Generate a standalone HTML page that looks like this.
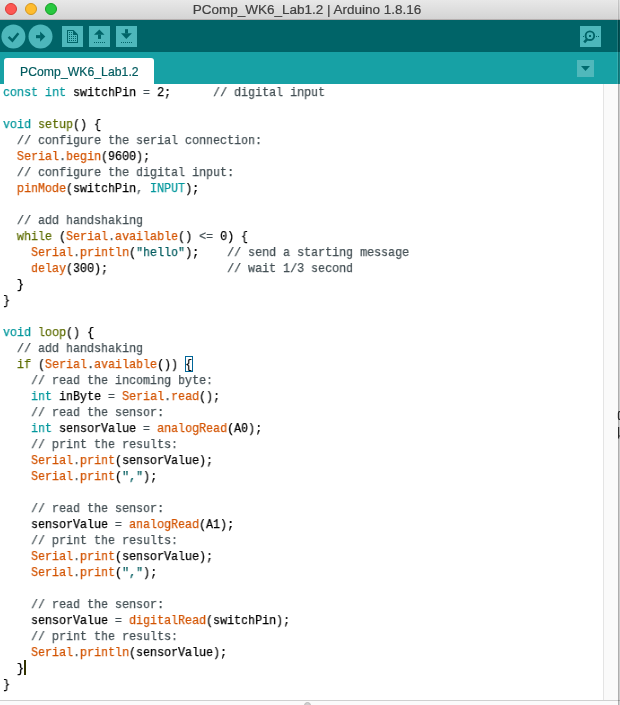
<!DOCTYPE html>
<html><head><meta charset="utf-8">
<style>
*{margin:0;padding:0;box-sizing:border-box}
html,body{width:620px;height:705px;overflow:hidden;background:#f2f2f2}
body{position:relative;font-family:"Liberation Sans",sans-serif}
#title{position:absolute;left:0;top:0;width:620px;height:20px;background:linear-gradient(#e8e8e8,#d4d4d4);border-bottom:1px solid #b5afaf}
#title .t{will-change:transform;-webkit-text-stroke:0.2px #404040;position:absolute;left:0;width:614px;top:2.5px;text-align:center;font-size:13.5px;color:#404040;line-height:14px}
.dot{position:absolute;top:3px;width:12px;height:12px;border-radius:50%}
#toolbar{position:absolute;left:0;top:20px;width:620px;height:32px;background:#006468}
#tabbar{position:absolute;left:0;top:52px;width:620px;height:32px;background:#17A1A5}
#tab{position:absolute;left:4px;top:6px;width:150px;height:27px;background:#fff;border-radius:3px 3px 0 0}
#tab span{will-change:transform;-webkit-text-stroke:0.2px #005B5F;position:absolute;left:15.5px;top:6.5px;font-size:12.2px;letter-spacing:0.05px;color:#005B5F;line-height:14px}
#dd{position:absolute;left:577px;top:8px;width:17px;height:17px;background:#50B8BB}
#editor{position:absolute;left:0;top:84px;width:603px;height:616px;background:#fff;overflow:hidden}
#sb{position:absolute;left:603px;top:84px;width:17px;height:616px;background:#fafafa;border-left:1px solid #e4e4e4}
#re1{position:absolute;left:617px;top:0;width:1px;height:84px;background:rgba(255,255,255,0.14)}
#re2{position:absolute;left:618px;top:20px;width:1px;height:685px;background:rgba(0,0,0,0.3)}
#re2t{position:absolute;left:618px;top:0;width:1px;height:20px;background:rgba(0,0,0,0.14)}
#re3{position:absolute;left:619px;top:20px;width:1px;height:685px;background:rgba(0,0,0,0.18)}
#re3t{position:absolute;left:619px;top:0;width:1px;height:20px;background:rgba(0,0,0,0.03)}
#bottom{position:absolute;left:0;top:700px;width:620px;height:5px;background:#fbfbfb;border-top:1px solid #d0d0d0}
#knob{position:absolute;left:303.5px;top:702px;width:7px;height:7px;border-radius:50%;background:#d0d0d0;border:1px solid #bababa}
.code{position:absolute;left:3px;top:1px;font-family:"Liberation Mono",monospace;font-size:13px;transform:scaleX(0.89744);transform-origin:0 0;will-change:transform;-webkit-text-stroke:0.25px currentColor;line-height:16px;color:#000;white-space:pre}
.ln{height:16px}
#bbox{position:absolute;left:185px;top:272px;width:8px;height:16px;border:1px solid #006699}
#caret{position:absolute;left:24px;top:576px;width:2px;height:15px;background:#333300}
</style></head><body>
<div id="title">
 <div class="dot" style="left:5px;background:#fd5753;border:1px solid #d83c36"></div>
 <div class="dot" style="left:25px;background:#febc2e;border:1px solid #d4961f"></div>
 <div class="dot" style="left:45px;background:#28c840;border:1px solid #14a024"></div>
 <div class="t">PComp_WK6_Lab1.2 | Arduino 1.8.16</div>
</div>
<div id="toolbar">
<svg width="618" height="32" viewBox="0 20 618 32" style="position:absolute;left:0;top:0">
 <circle cx="13.4" cy="36.5" r="12" fill="#4DB7BB"/>
 <circle cx="40.5" cy="36.5" r="12" fill="#4DB7BB"/>
 <polyline points="8.6,36.8 12.4,40.6 18.4,33.2" fill="none" stroke="#006468" stroke-width="2.5"/>
 <rect x="36" y="35.1" width="4.4" height="3.1" fill="#006468"/>
 <polygon points="40.1,31.5 45.3,36.6 40.1,41.8" fill="#006468"/>
 <rect x="62" y="26" width="21" height="21" fill="#4DB7BB"/>
 <rect x="89" y="26" width="21" height="21" fill="#4DB7BB"/>
 <rect x="116" y="26" width="21" height="21" fill="#4DB7BB"/>
 <rect x="580" y="26" width="21" height="21" fill="#4DB7BB"/>
 <!-- new doc -->
 <polygon points="67,30 73.5,30 78,34.5 78,43 67,43" fill="#006468"/>
 <polygon points="68,31 73,31 73,35 77,35 77,42 68,42" fill="#4DB7BB"/>
 <g fill="#006468">
  <rect x="69" y="32" width="1" height="1"/><rect x="71" y="32" width="1" height="1"/>
  <rect x="69" y="34" width="1" height="1"/><rect x="71" y="34" width="1" height="1"/>
  <rect x="69" y="36" width="1" height="1"/><rect x="71" y="36" width="1" height="1"/><rect x="73" y="36" width="1" height="1"/><rect x="75" y="36" width="1" height="1"/>
  <rect x="69" y="38" width="1" height="1"/><rect x="71" y="38" width="1" height="1"/><rect x="73" y="38" width="1" height="1"/><rect x="75" y="38" width="1" height="1"/>
  <rect x="69" y="40" width="1" height="1"/><rect x="71" y="40" width="1" height="1"/><rect x="73" y="40" width="1" height="1"/><rect x="75" y="40" width="1" height="1"/>
 </g>
 <!-- upload -->
 <polygon points="99.3,29.5 94,34.7 104.5,34.7" fill="#006468"/>
 <rect x="98" y="34.6" width="3" height="4.3" fill="#006468"/>
 <g fill="#006468">
  <rect x="94" y="42" width="1" height="1"/><rect x="96" y="42" width="1" height="1"/><rect x="98" y="42" width="1" height="1"/><rect x="100" y="42" width="1" height="1"/><rect x="102" y="42" width="1" height="1"/><rect x="104" y="42" width="1" height="1"/>
 </g>
 <!-- download -->
 <rect x="125" y="29.2" width="3" height="4.2" fill="#006468"/>
 <polygon points="121,33.3 131.9,33.3 126.3,38.9" fill="#006468"/>
 <g fill="#006468">
  <rect x="121" y="42" width="1" height="1"/><rect x="123" y="42" width="1" height="1"/><rect x="125" y="42" width="1" height="1"/><rect x="127" y="42" width="1" height="1"/><rect x="129" y="42" width="1" height="1"/><rect x="131" y="42" width="1" height="1"/>
 </g>
 <!-- search -->
 <circle cx="589.9" cy="35.7" r="4.3" fill="none" stroke="#006468" stroke-width="1.9"/>
 <rect x="589" y="35" width="2" height="2" fill="#006468"/>
 <line x1="584.2" y1="42.4" x2="587.2" y2="39.2" stroke="#006468" stroke-width="2.6"/>
 <rect x="583" y="36" width="1" height="1" fill="#006468"/>
 <rect x="596" y="36" width="1" height="1" fill="#006468"/>
 <rect x="598" y="36" width="1" height="1" fill="#006468"/>
</svg>
</div>
<div id="tabbar">
 <div id="tab"><span>PComp_WK6_Lab1.2</span></div>
 <div id="dd"><svg width="17" height="17" style="position:absolute;left:0;top:0"><polygon points="4,6 13,6 8.5,11" fill="#006a6e"/></svg></div>
</div>
<div id="editor"><div class="code"><div class="ln"><span style="color:#00979C">const</span> <span style="color:#00979C">int</span> switchPin <span style="color:#434F54">=</span> 2;      <span style="color:#434F54">// digital input</span></div><div class="ln"></div><div class="ln"><span style="color:#00979C">void</span> <span style="color:#5E6D03">setup</span>() {</div><div class="ln">  <span style="color:#434F54">// configure the serial connection:</span></div><div class="ln">  <span style="color:#D35400">Serial</span><span style="color:#434F54">.</span><span style="color:#D35400">begin</span>(9600);</div><div class="ln">  <span style="color:#434F54">// configure the digital input:</span></div><div class="ln">  <span style="color:#D35400">pinMode</span>(switchPin<span style="color:#434F54">,</span> <span style="color:#00979C">INPUT</span>);</div><div class="ln"></div><div class="ln">  <span style="color:#434F54">// add handshaking</span></div><div class="ln">  <span style="color:#5E6D03">while</span> (<span style="color:#D35400">Serial</span><span style="color:#434F54">.</span><span style="color:#D35400">available</span>() <span style="color:#434F54">&lt;</span><span style="color:#434F54">=</span> 0) {</div><div class="ln">    <span style="color:#D35400">Serial</span><span style="color:#434F54">.</span><span style="color:#D35400">println</span>(<span style="color:#005C5F">&quot;hello&quot;</span>);    <span style="color:#434F54">// send a starting message</span></div><div class="ln">    <span style="color:#D35400">delay</span>(300);                 <span style="color:#434F54">// wait 1/3 second</span></div><div class="ln">  }</div><div class="ln">}</div><div class="ln"></div><div class="ln"><span style="color:#00979C">void</span> <span style="color:#5E6D03">loop</span>() {</div><div class="ln">  <span style="color:#434F54">// add handshaking</span></div><div class="ln">  <span style="color:#5E6D03">if</span> (<span style="color:#D35400">Serial</span><span style="color:#434F54">.</span><span style="color:#D35400">available</span>()) {</div><div class="ln">    <span style="color:#434F54">// read the incoming byte:</span></div><div class="ln">    <span style="color:#00979C">int</span> inByte <span style="color:#434F54">=</span> <span style="color:#D35400">Serial</span><span style="color:#434F54">.</span><span style="color:#D35400">read</span>();</div><div class="ln">    <span style="color:#434F54">// read the sensor:</span></div><div class="ln">    <span style="color:#00979C">int</span> sensorValue <span style="color:#434F54">=</span> <span style="color:#D35400">analogRead</span>(A0);</div><div class="ln">    <span style="color:#434F54">// print the results:</span></div><div class="ln">    <span style="color:#D35400">Serial</span><span style="color:#434F54">.</span><span style="color:#D35400">print</span>(sensorValue);</div><div class="ln">    <span style="color:#D35400">Serial</span><span style="color:#434F54">.</span><span style="color:#D35400">print</span>(<span style="color:#005C5F">&quot;,&quot;</span>);</div><div class="ln"></div><div class="ln">    <span style="color:#434F54">// read the sensor:</span></div><div class="ln">    sensorValue <span style="color:#434F54">=</span> <span style="color:#D35400">analogRead</span>(A1);</div><div class="ln">    <span style="color:#434F54">// print the results:</span></div><div class="ln">    <span style="color:#D35400">Serial</span><span style="color:#434F54">.</span><span style="color:#D35400">print</span>(sensorValue);</div><div class="ln">    <span style="color:#D35400">Serial</span><span style="color:#434F54">.</span><span style="color:#D35400">print</span>(<span style="color:#005C5F">&quot;,&quot;</span>);</div><div class="ln"></div><div class="ln">    <span style="color:#434F54">// read the sensor:</span></div><div class="ln">    sensorValue <span style="color:#434F54">=</span> <span style="color:#D35400">digitalRead</span>(switchPin);</div><div class="ln">    <span style="color:#434F54">// print the results:</span></div><div class="ln">    <span style="color:#D35400">Serial</span><span style="color:#434F54">.</span><span style="color:#D35400">println</span>(sensorValue);</div><div class="ln">  }</div><div class="ln">}</div></div><div id="bbox"></div><div id="caret"></div></div>
<div id="sb"></div>
<div id="bottom"></div>
<div id="knob"></div><div id="re1"></div><div id="re2"></div><div id="re3"></div><div id="re2t"></div><div id="re3t"></div>
<svg width="620" height="705" style="position:absolute;left:0;top:0"><path d="M620,411.6 H619.4 Q618.5,411.6 618.5,413.2 V417.8 Q618.5,419.4 619.4,419.4 H620" fill="none" stroke="#2a2a2a" stroke-width="1.3"/><path d="M618.6,427 V438.6 M618.6,436 H620" fill="none" stroke="#2a2a2a" stroke-width="1.2"/></svg>
</body></html>
